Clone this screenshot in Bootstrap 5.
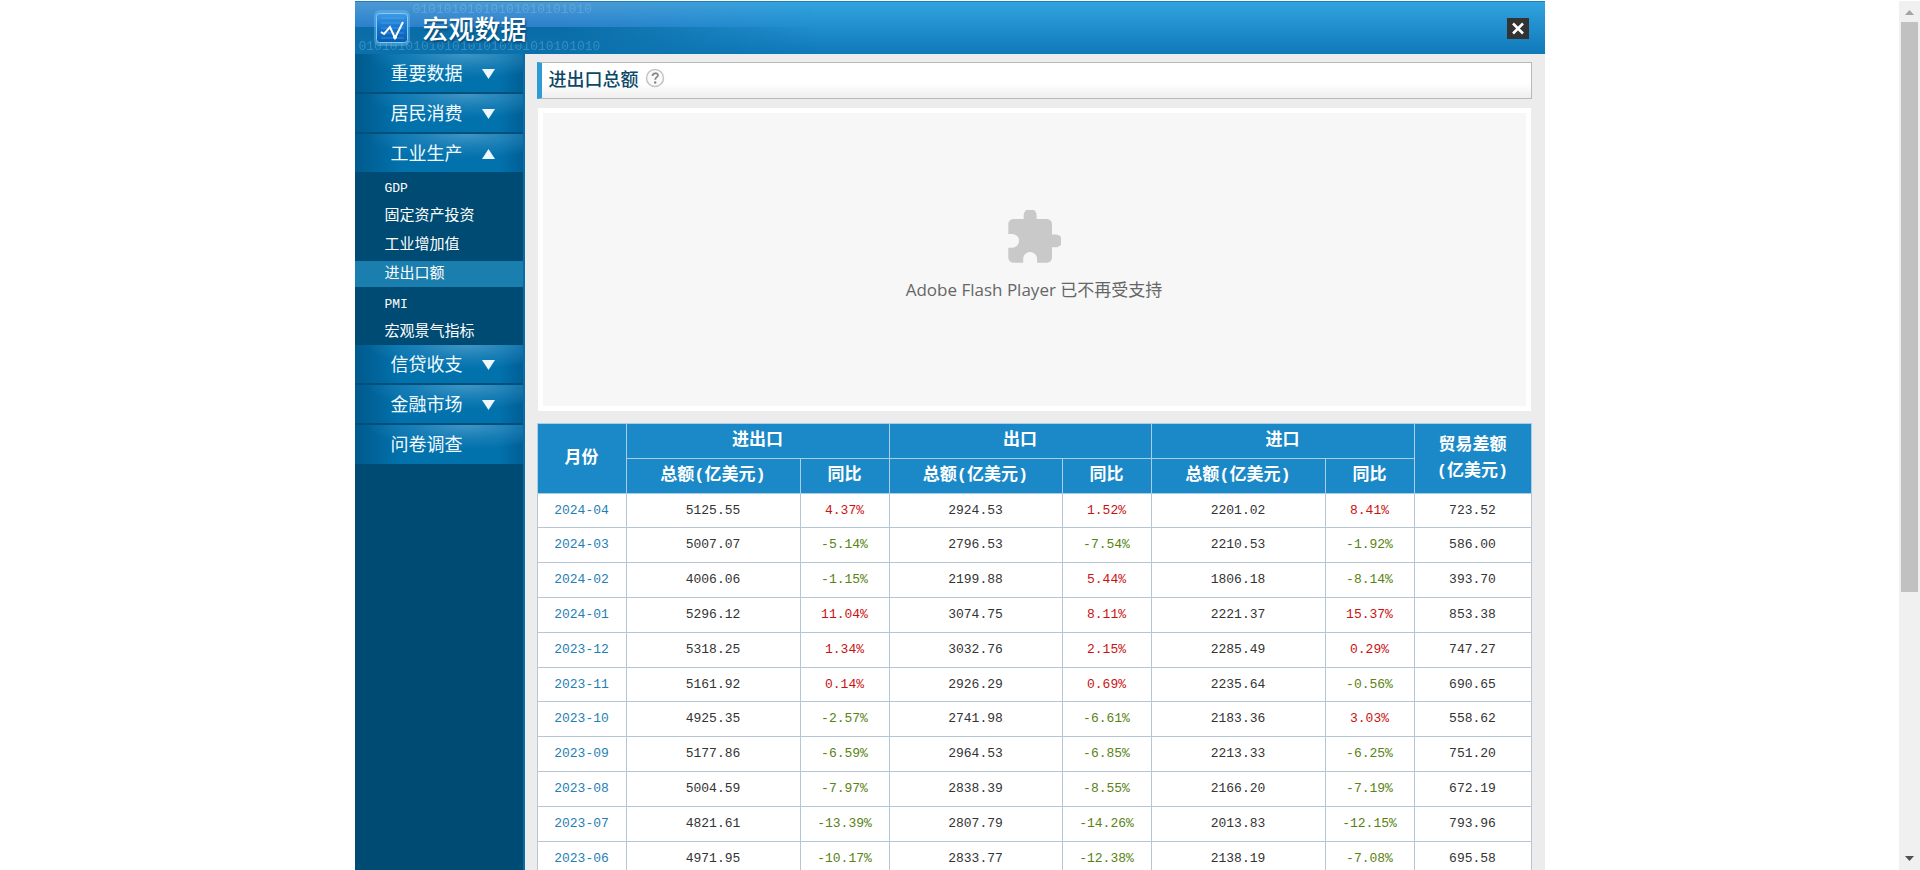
<!DOCTYPE html>
<html lang="zh-CN">
<head>
<meta charset="utf-8">
<meta name="viewport" content="width=device-width, initial-scale=1">
<title>宏观数据</title>
<link href="https://cdn.jsdelivr.net/npm/bootstrap@5.3.0/dist/css/bootstrap.min.css" rel="stylesheet">
<style>
body{font-family:"Liberation Sans","Noto Sans CJK SC",sans-serif;background:#fff;color:#333;padding-top:1px}
.pane{min-width:0}
.app{max-width:1190px;min-height:100%}
.topbar{height:53px;border-top:1px solid #1d7fb5;background:linear-gradient(#31a4df,#0f78b9)}
.brand-area{width:460px;height:52px;background:linear-gradient(to bottom,#4c9ad4 0,#2b80cc 25px,#0a6ca6 25px,#0b71ac 100%);-webkit-mask-image:linear-gradient(90deg,#000 45%,transparent);mask-image:linear-gradient(90deg,#000 45%,transparent)}
.bits{font:13px/12px "Liberation Mono",monospace;color:#9bd0f2;opacity:.3;white-space:nowrap}
.bits-top{top:2px;left:58px}
.bits-bottom{top:39px;left:4px}
.brand{left:18px;top:7px;gap:12px;color:#fff}
.brand h1{font:500 26px/24px "Noto Sans CJK SC",sans-serif;margin:0;text-shadow:1px 2px 2px #064c78}
.close-btn{width:22px;height:21px;background:#333;margin-right:16px}
.side{width:170px;background:#004b73;border-right:2px solid #0b6ca4}
.menu-btn{height:40px;padding:0 28px 2px 36px;border:0;border-bottom:2px solid #004f7c;color:#f2fbff;font:400 18px/36px "Noto Sans CJK SC",sans-serif;background:radial-gradient(ellipse 100px 24px at 66% 0,#3f95c5 0,rgba(40,135,188,.55) 55%,transparent 100%),linear-gradient(90deg,#015a8d,#0272ad 28%,#0272ad 85%,#015f96)}
.menu-btn svg{margin-top:4px}
.menu-btn.last-item{height:39px;border-bottom:0;padding-bottom:4px}
.menu-btn.open-item{height:38px;border-bottom:0}
.sub{padding-top:2px;gap:3px}
.sub a{height:26px;padding-left:30px;color:#fff;text-decoration:none;font:400 15px/28px "Liberation Mono","Noto Sans CJK SC",monospace}
.sub a.latin{font-size:13px;line-height:30px}
.sub a.current{background:#1a7eae}
.content-area{background:#ececec;padding:8px 13px 0 12px;min-width:0}
.title-box{height:37px;border:1px solid #b9b9b9;border-left:5px solid #2d9bd6;background:linear-gradient(#fff 60%,#eee);padding:0 0 5px 7px;gap:6px}
.title-box h2{font:500 18px/30px "Noto Sans CJK SC",sans-serif;color:#0b4766;margin:0}
.flash{height:303px;margin:9px 1px 12px;padding-bottom:8px;border:5px solid #fff;background:#f7f7f7}
.flash p{font:400 17px/24px "Open Sans","Noto Sans CJK SC",sans-serif;color:#666;margin:14px 0 0}
.trade{table-layout:fixed;border-collapse:collapse;width:100%;background:#fff;text-align:center}
.trade th,.trade td{border:1px solid #b7c6d6;padding:0;vertical-align:middle}
.trade th{background:#1b89c7;color:#fff;border-color:#a9cfe8;font:700 17px/26px "Liberation Mono","Noto Sans CJK SC",monospace;height:35px}
.trade td{height:35px;font:13px/20px "Liberation Mono",monospace;color:#333}
.trade tbody tr:nth-child(5n+1) td{height:34px}
.trade a{color:#1f80b5;text-decoration:none}
.trade td.up{color:#c91212}
.trade td.down{color:#598212}
.c-small{width:89px}.c-wide{width:174px}.c-mid{width:173px}
.rail{width:21px;background:#f0f0f0;padding:0 2px}
.rail .thumb{flex:0 1 570px;background:#c1c1c1}
.rail svg{flex:none}
</style>
</head>
<body class="vh-100 overflow-hidden d-flex">
<div class="pane flex-grow-1 overflow-hidden">
 <div class="app mx-auto d-flex flex-column h-100">
  <header class="topbar position-relative d-flex justify-content-between align-items-start flex-shrink-0">
   <div class="brand-area position-relative overflow-hidden">
    <span class="bits bits-top position-absolute" aria-hidden="true">01010101010101010101010</span>
    <span class="bits bits-bottom position-absolute" aria-hidden="true">0101010101010101010101010101010</span>
   </div>
   <div class="brand position-absolute d-flex align-items-center">
    <svg width="38" height="38" viewBox="0 0 38 38" aria-hidden="true">
     <defs><linearGradient id="lg" x2="0" y2="1"><stop offset="0" stop-color="#3e9be6"/><stop offset=".5" stop-color="#1374cf"/><stop offset="1" stop-color="#065cae"/></linearGradient></defs>
     <rect x="1" y="1" width="36" height="36" rx="6" fill="#78c3f5" opacity=".4"/>
     <rect x="3.500" y="4.500" width="31" height="29" rx="3" fill="url(#lg)" stroke="#80cbf7"/>
     <path d="M8 9h23M8 14h23M8 19h23M8 24h23M8 29h23" stroke="#66b2ed" opacity=".5"/>
     <path d="M8 23 11 25 17 18 22 29 30 13" fill="none" stroke="#fff" stroke-width="2"/><circle cx="22" cy="28" r="2" fill="#fff"/>
    </svg>
    <h1>宏观数据</h1>
   </div>
   <button type="button" class="close-btn border-0 p-0 mt-3 d-flex align-items-center justify-content-center" aria-label="关闭">
    <svg width="14" height="13" viewBox="0 0 14 13"><path d="M2 1.500 12 11.500M12 1.500 2 11.500" stroke="#fff" stroke-width="2.500"/></svg>
   </button>
  </header>
  <div class="d-flex flex-grow-1">
   <nav class="side flex-shrink-0 d-flex flex-column" aria-label="数据分类">
    <button type="button" class="menu-btn d-flex justify-content-between align-items-center">重要数据<svg width="13" height="10"><path d="M0 0h13L6.500 10z" fill="#eef8fd"/></svg></button>
    <button type="button" class="menu-btn d-flex justify-content-between align-items-center">居民消费<svg width="13" height="10"><path d="M0 0h13L6.500 10z" fill="#eef8fd"/></svg></button>
    <button type="button" class="menu-btn open-item d-flex justify-content-between align-items-center" aria-expanded="true">工业生产<svg width="13" height="10"><path d="M0 10h13L6.500 0z" fill="#eef8fd"/></svg></button>
    <div class="sub d-flex flex-column">
     <a href="#" class="latin">GDP</a>
     <a href="#">固定资产投资</a>
     <a href="#">工业增加值</a>
     <a href="#" class="current">进出口额</a>
     <a href="#" class="latin">PMI</a>
     <a href="#">宏观景气指标</a>
    </div>
    <button type="button" class="menu-btn d-flex justify-content-between align-items-center">信贷收支<svg width="13" height="10"><path d="M0 0h13L6.500 10z" fill="#eef8fd"/></svg></button>
    <button type="button" class="menu-btn d-flex justify-content-between align-items-center">金融市场<svg width="13" height="10"><path d="M0 0h13L6.500 10z" fill="#eef8fd"/></svg></button>
    <button type="button" class="menu-btn last-item d-flex align-items-center">问卷调查</button>
   </nav>
   <main class="content-area flex-grow-1">
    <div class="title-box d-flex align-items-center">
     <h2>进出口总额</h2>
     <svg width="20" height="20" viewBox="0 0 20 20" aria-hidden="true"><circle cx="10" cy="10" r="8.500" fill="#fafafa" stroke="#c4c4c4" stroke-width="1.500"/><path d="M7.500 8c0-3.500 5.500-3.500 5.500-.8 0 2-2.800 2-2.800 4.500" fill="none" stroke="#888" stroke-width="1.800"/><circle cx="10.200" cy="14.500" r="1.200" fill="#888"/></svg>
    </div>
    <div class="flash d-flex flex-column align-items-center justify-content-center">
     <svg width="54" height="54" viewBox="1.500 1.500 21 21" aria-hidden="true"><path fill="#c9c9c9" d="M20.500 11H19V7c0-1.100-.9-2-2-2h-4V3.500C13 2.120 11.880 1 10.500 1S8 2.120 8 3.500V5H4c-1.100 0-1.990.9-1.990 2v3.800H3.500c1.490 0 2.700 1.210 2.700 2.700s-1.210 2.700-2.700 2.700H2V20c0 1.100.9 2 2 2h3.800v-1.500c0-1.490 1.210-2.700 2.700-2.700s2.700 1.210 2.700 2.700V22H17c1.100 0 2-.9 2-2v-4h1.500c1.380 0 2.500-1.120 2.500-2.500S21.880 11 20.500 11z"/></svg>
     <p>Adobe Flash Player 已不再受支持</p>
    </div>
    <table class="trade">
     <colgroup><col class="c-small"><col class="c-wide"><col class="c-small"><col class="c-mid"><col class="c-small"><col class="c-wide"><col class="c-small"><col></colgroup>
     <thead>
      <tr><th rowspan="2" scope="col">月份</th><th colspan="2" scope="colgroup">进出口</th><th colspan="2" scope="colgroup">出口</th><th colspan="2" scope="colgroup">进口</th><th rowspan="2" scope="col">贸易差额<br>(亿美元)</th></tr>
      <tr><th scope="col">总额(亿美元)</th><th scope="col">同比</th><th scope="col">总额(亿美元)</th><th scope="col">同比</th><th scope="col">总额(亿美元)</th><th scope="col">同比</th></tr>
     </thead>
     <tbody id="rows"></tbody>
    </table>
   </main>
  </div>
 </div>
</div>
<div class="rail flex-shrink-0 d-flex flex-column" aria-hidden="true">
 <svg width="17" height="21"><path d="M4 14h9L8.500 9z" fill="#a3a3a3"/></svg>
 <div class="thumb"></div>
 <svg class="mt-auto" width="17" height="21"><path d="M4 7h9L8.500 12z" fill="#505050"/></svg>
</div>
<script src="https://cdn.jsdelivr.net/npm/bootstrap@5.3.0/dist/js/bootstrap.bundle.min.js"></script>
<script>
const data = [
 ['2024-04','5125.55','4.37%','2924.53','1.52%','2201.02','8.41%','723.52'],
 ['2024-03','5007.07','-5.14%','2796.53','-7.54%','2210.53','-1.92%','586.00'],
 ['2024-02','4006.06','-1.15%','2199.88','5.44%','1806.18','-8.14%','393.70'],
 ['2024-01','5296.12','11.04%','3074.75','8.11%','2221.37','15.37%','853.38'],
 ['2023-12','5318.25','1.34%','3032.76','2.15%','2285.49','0.29%','747.27'],
 ['2023-11','5161.92','0.14%','2926.29','0.69%','2235.64','-0.56%','690.65'],
 ['2023-10','4925.35','-2.57%','2741.98','-6.61%','2183.36','3.03%','558.62'],
 ['2023-09','5177.86','-6.59%','2964.53','-6.85%','2213.33','-6.25%','751.20'],
 ['2023-08','5004.59','-7.97%','2838.39','-8.55%','2166.20','-7.19%','672.19'],
 ['2023-07','4821.61','-13.39%','2807.79','-14.26%','2013.83','-12.15%','793.96'],
 ['2023-06','4971.95','-10.17%','2833.77','-12.38%','2138.19','-7.08%','695.58']
];
document.getElementById('rows').innerHTML = data.map(r => '<tr>' + r.map((v, i) => {
  if (i === 0) return `<td><a href="#">${v}</a></td>`;
  if (v.endsWith('%')) return `<td class="${v[0] === '-' ? 'down' : 'up'}">${v}</td>`;
  return `<td>${v}</td>`;
}).join('') + '</tr>').join('');
</script>
</body>
</html>
